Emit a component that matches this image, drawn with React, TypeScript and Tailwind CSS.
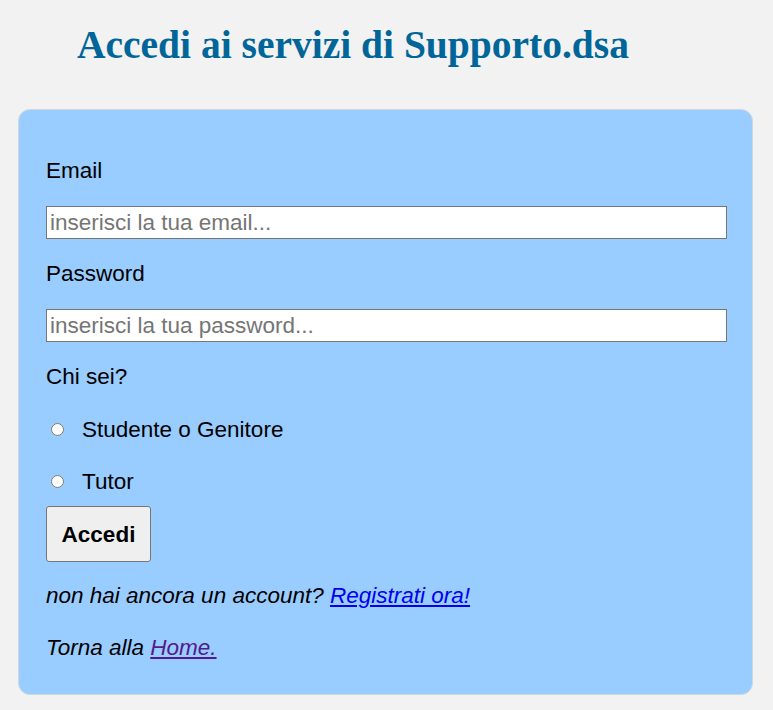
export default function App() {
  return (
    <div className="min-h-[710px] bg-[#f2f2f2] pt-[19px] font-['Liberation_Sans',Arial,sans-serif] text-black">
      <h1 className="pl-[77px] font-['Liberation_Serif','Times_New_Roman',serif] text-[39.5px] font-bold leading-[53px] text-[#006699]">
        Accedi ai servizi di Supporto.dsa
      </h1>

      <div className="ml-[18px] mr-[20px] mt-[37px] rounded-[12px] border border-[#cfd8e0] bg-[#99ccff] pl-[27px] pr-[25px] pt-[48px] pb-[34px] text-[22.5px] leading-[25px]">
        <form onSubmit={(e) => e.preventDefault()}>
          <label htmlFor="email" className="mb-[23px] block">Email</label>
          <input
            id="email"
            type="email"
            placeholder="inserisci la tua email..."
            className="mb-[22px] block h-[33px] w-full border border-[#767676] bg-white px-[3px] text-[22.5px] placeholder:text-[#757575]"
          />

          <label htmlFor="password" className="mb-[23px] block">Password</label>
          <input
            id="password"
            type="password"
            placeholder="inserisci la tua password..."
            className="mb-[22px] block h-[33px] w-full border border-[#767676] bg-white px-[3px] text-[22.5px] placeholder:text-[#757575]"
          />

          <p className="mb-[28px]">Chi sei?</p>

          <label className="mb-[27px] flex items-center">
            <input type="radio" name="ruolo" className="ml-[5px] h-[13px] w-[13px]" />
            <span className="ml-[18px]">Studente o Genitore</span>
          </label>
          <label className="mb-[12px] flex items-center">
            <input type="radio" name="ruolo" className="ml-[5px] h-[13px] w-[13px]" />
            <span className="ml-[18px]">Tutor</span>
          </label>

          <button
            type="submit"
            className="mb-[21px] block h-[56px] w-[105px] rounded-[3px] border border-[#767676] bg-[#efefef] text-[22.5px] font-bold"
          >
            Accedi
          </button>
        </form>

        <p className="mb-[27px] italic">
          non hai ancora un account? <a href="#" className="text-[#0000ee] underline">Registrati ora!</a>
        </p>
        <p className="italic">
          Torna alla <a href="#" className="text-[#551a8b] underline">Home.</a>
        </p>
      </div>
    </div>
  )
}
